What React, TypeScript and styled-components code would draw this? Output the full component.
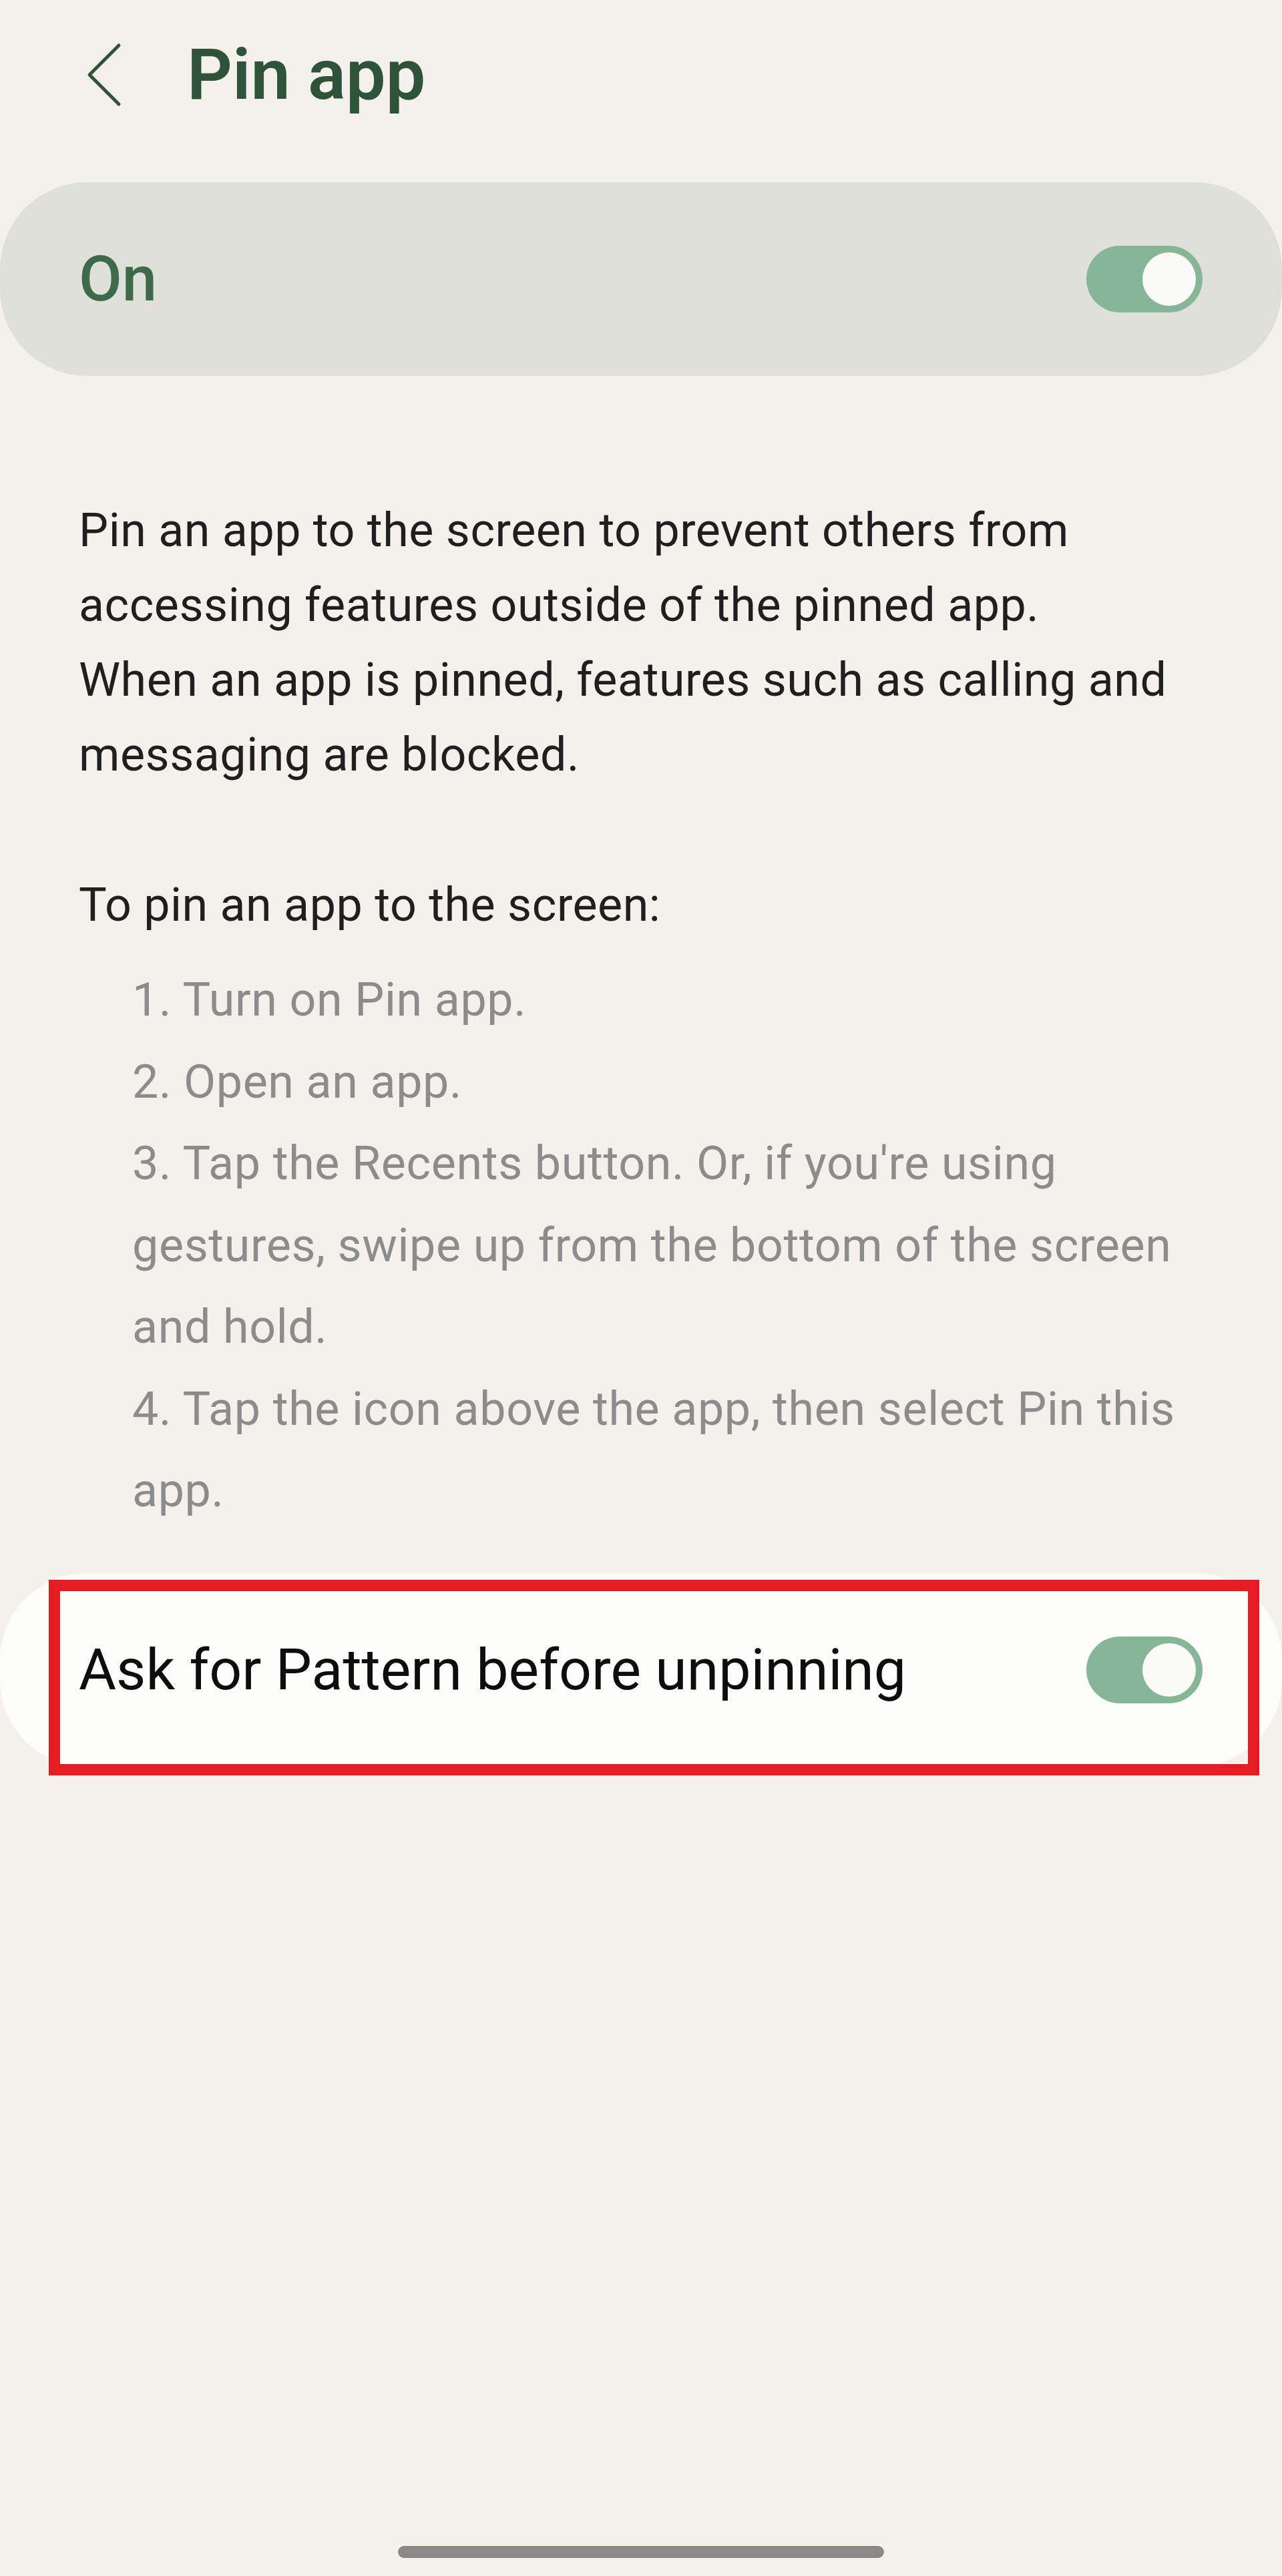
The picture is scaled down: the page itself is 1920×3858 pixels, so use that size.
import styled, { createGlobalStyle } from "styled-components";
import { ReactNode } from "react";

const GlobalStyle = createGlobalStyle`
  html, body {
    margin: 0;
    padding: 0;
    background: #f4f1ec;
  }

  body {
    font-family: Roboto, "Noto Sans", "Liberation Sans", sans-serif;
  }
`;

const Page = styled.div`
  display: flex;
  flex-direction: column;
  min-height: 3858px;
  background: #f4f1ec;
`;

const Header = styled.header`
  display: flex;
  align-items: center;
  gap: 96px;
  padding: 60px 0 0 128px;
`;

const BackButton = styled.button`
  display: flex;
  align-items: center;
  justify-content: center;
  width: 56px;
  height: 96px;
  padding: 0;
  border: 0;
  background: transparent;
  color: #2f5339;
  cursor: pointer;
`;

const Title = styled.h1`
  margin: 0;
  font-size: 106px;
  line-height: 104px;
  font-weight: 600;
  color: #2f5339;
`;

const MainSection = styled.div`
  margin-top: 109px;
`;

const SwitchCard = styled.div<{ $tone: "main" | "plain" }>`
  position: relative;
  display: flex;
  align-items: center;
  justify-content: space-between;
  height: 290px;
  padding: 0 119px 0 118px;
  border-radius: 130px;
  background: ${(p) => (p.$tone === "main" ? "#e0e0db" : "#fcfcfb")};
`;

const MainLabel = styled.span`
  font-size: 94px;
  line-height: 94px;
  font-weight: 500;
  color: #3e6a4a;
`;

const RowLabel = styled.span`
  font-size: 86px;
  line-height: 86px;
  color: #0d0d0d;
`;

const Track = styled.span<{ $on: boolean }>`
  display: flex;
  align-items: center;
  justify-content: ${(p) => (p.$on ? "flex-end" : "flex-start")};
  width: 174px;
  height: 100px;
  padding: 0 10px;
  box-sizing: border-box;
  border-radius: 50px;
  background: ${(p) => (p.$on ? "#87b696" : "#b9b9b4")};
`;

const Thumb = styled.span`
  width: 80px;
  height: 80px;
  border-radius: 50%;
  background: #fbfbfa;
`;

const Description = styled.section`
  padding: 175px 118px 0;
`;

const Paragraph = styled.p`
  margin: 0;
  font-size: 70px;
  line-height: 112px;
  letter-spacing: 0.5px;
  color: #1f1f1f;
`;

const StepsIntro = styled(Paragraph)`
  margin-top: 113px;
`;

const Steps = styled.ol`
  list-style: none;
  margin: 25px 0 0;
  padding: 0 0 0 80px;
`;

const Step = styled.li`
  font-size: 70px;
  line-height: 122.5px;
  letter-spacing: 0.6px;
  color: #8c8c8c;
`;

const AskSection = styled.div`
  margin-top: 62px;
`;

const Highlight = styled.div`
  position: absolute;
  top: 10px;
  left: 73px;
  width: 1813px;
  height: 293px;
  box-sizing: border-box;
  border: 17px solid #e41d25;
  pointer-events: none;
`;

const HomeBar = styled.div`
  align-self: center;
  width: 728px;
  height: 18px;
  margin: auto 0 27px;
  border-radius: 9px;
  background: #8b8987;
`;

const Toggle = ({ on }: { on: boolean }): ReactNode => (
  <Track $on={on}>
    <Thumb />
  </Track>
);

const steps = [
  "1. Turn on Pin app.",
  "2. Open an app.",
  "3. Tap the Recents button. Or, if you're using gestures, swipe up from the bottom of the screen and hold.",
  "4. Tap the icon above the app, then select Pin this app.",
];

export default function App() {
  return (
    <>
      <GlobalStyle />
      <Page>
        <Header>
          <BackButton aria-label="Back">
            <svg width="56" height="96" viewBox="0 0 56 96" fill="none">
              <path
                d="M50 4 L6 48 L50 92"
                stroke="currentColor"
                strokeWidth="5"
                strokeLinecap="round"
                strokeLinejoin="round"
              />
            </svg>
          </BackButton>
          <Title>Pin app</Title>
        </Header>

        <MainSection>
          <SwitchCard $tone="main">
            <MainLabel>On</MainLabel>
            <Toggle on />
          </SwitchCard>
        </MainSection>

        <Description>
          <Paragraph>
            Pin an app to the screen to prevent others from accessing features
            outside of the pinned app.
            <br />
            When an app is pinned, features such as calling and messaging are
            blocked.
          </Paragraph>
          <StepsIntro>To pin an app to the screen:</StepsIntro>
          <Steps>
            {steps.map((s) => (
              <Step key={s}>{s}</Step>
            ))}
          </Steps>
        </Description>

        <AskSection>
          <SwitchCard $tone="plain">
            <RowLabel>Ask for Pattern before unpinning</RowLabel>
            <Toggle on />
            <Highlight />
          </SwitchCard>
        </AskSection>

        <HomeBar />
      </Page>
    </>
  );
}
